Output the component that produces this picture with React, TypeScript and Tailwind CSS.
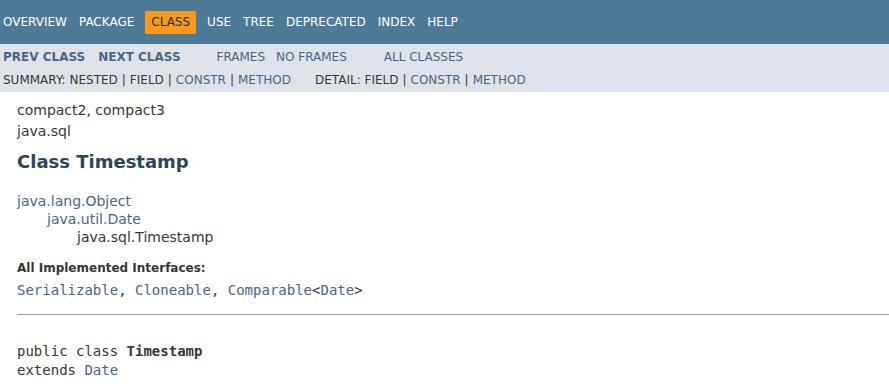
const NAV = ['OVERVIEW', 'PACKAGE', 'CLASS', 'USE', 'TREE', 'DEPRECATED', 'INDEX', 'HELP'];

const sans = "font-['DejaVu_Sans',Arial,sans-serif]";
const mono = "font-['DejaVu_Sans_Mono',monospace]";

function Sep() {
  return <span className="px-1 text-[#353833]">|</span>;
}

export default function App() {
  return (
    <div className={`min-h-screen bg-white text-[#353833] ${sans}`}>
      {/* top nav */}
      <div className="flex h-[44px] items-center bg-[#4D7A97] pl-[3px] text-[12px] text-white">
        {NAV.map((item) => (
          <span
            key={item}
            className={
              item === 'CLASS'
                ? 'mr-[11px] -ml-[1px] flex h-[23px] items-center bg-[#F8981D] px-[6px] text-[#253748]'
                : 'mr-[12px]'
            }
          >
            {item}
          </span>
        ))}
      </div>

      {/* sub nav */}
      <div className="flex h-[48px] flex-col bg-[#dee3e9] pl-[3px] text-[12px]">
        <div className="flex h-[24px] items-end pb-[2px] text-[#4A6782]">
          <span className="font-bold">PREV CLASS</span>
          <span className="ml-[13px] font-bold">NEXT CLASS</span>
          <span className="ml-[36px]">FRAMES</span>
          <span className="ml-[11px]">NO FRAMES</span>
          <span className="ml-[37px]">ALL CLASSES</span>
        </div>
        <div className="flex h-[24px] items-center">
          <span>
            SUMMARY: NESTED<Sep />FIELD<Sep />
            <span className="text-[#4A6782]">CONSTR</span>
            <Sep />
            <span className="text-[#4A6782]">METHOD</span>
          </span>
          <span className="ml-[24px]">
            DETAIL: FIELD<Sep />
            <span className="text-[#4A6782]">CONSTR</span>
            <Sep />
            <span className="text-[#4A6782]">METHOD</span>
          </span>
        </div>
      </div>

      {/* content */}
      <div className="pl-[17px] pt-[8px]">
        <div className="text-[14px] leading-[21px]">compact2, compact3</div>
        <div className="text-[14px] leading-[20px]">java.sql</div>
        <h2 className="mt-[9px] text-[18px] font-bold leading-[24px] text-[#2c4557]">Class Timestamp</h2>

        <div className="mt-[18px] text-[14px] leading-[18px]">
          <div className="text-[#4A6782]">java.lang.Object</div>
          <div className="pl-[30px] text-[#4A6782]">java.util.Date</div>
          <div className="pl-[60px]">java.sql.Timestamp</div>
        </div>

        <div className="mt-[14px] text-[12px] font-bold leading-[16px]">All Implemented Interfaces:</div>
        <div className={`mt-[5px] text-[14px] leading-[18px] ${mono}`}>
          <span className="text-[#4A6782]">Serializable</span>, <span className="text-[#4A6782]">Cloneable</span>,{' '}
          <span className="text-[#4A6782]">Comparable</span>&lt;<span className="text-[#4A6782]">Date</span>&gt;
        </div>

        <hr className="mt-[15px] border-t-[1px] border-[#9a9a9a]" />

        <div className={`mt-[27px] text-[14px] leading-[19px] ${mono}`}>
          <div>
            public class <span className="font-bold">Timestamp</span>
          </div>
          <div>
            extends <span className="text-[#4A6782]">Date</span>
          </div>
        </div>
      </div>
    </div>
  );
}
